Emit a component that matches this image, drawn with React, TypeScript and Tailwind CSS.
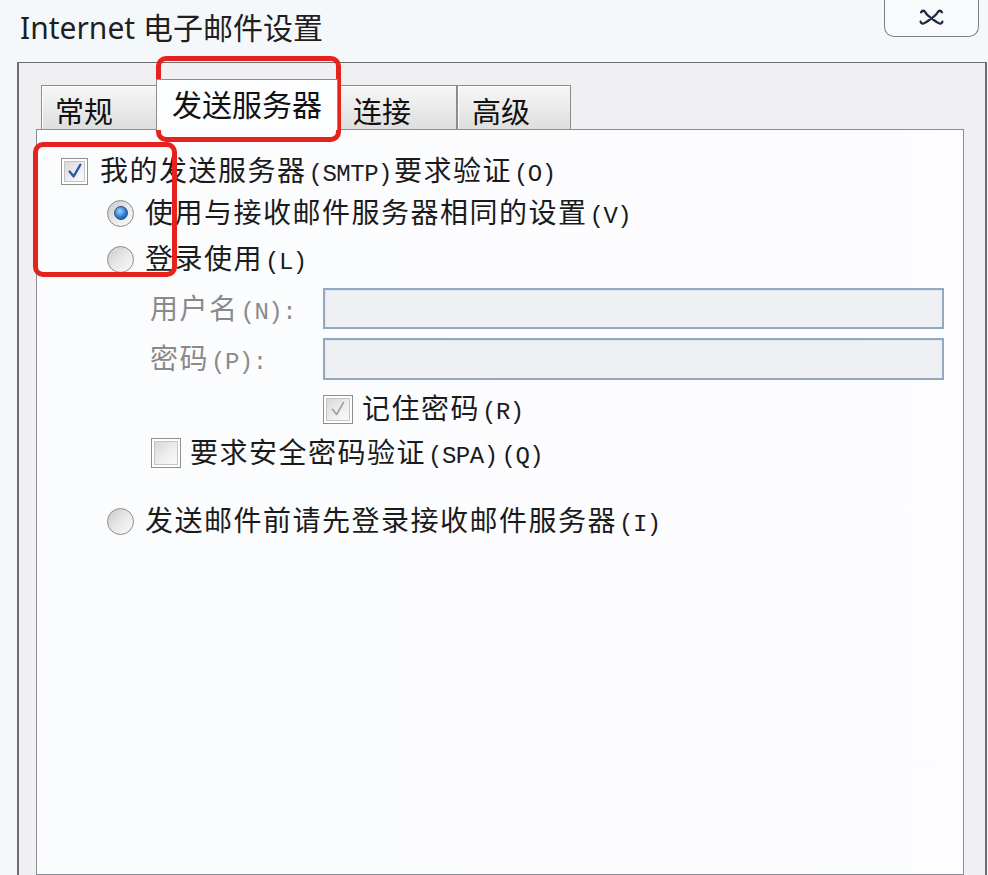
import React from "react";

const cjk = "font-['Noto_Sans_CJK_SC',sans-serif]";
const mono = "font-['Liberation_Mono','Noto_Sans_CJK_SC',monospace] text-[24px]";

function Check({ checked, disabled, size = "w-[27px] h-[27px]" }: { checked?: boolean; disabled?: boolean; size?: string }) {
	return (
		<span className={`${size} shrink-0 border border-[#8e8f8f] bg-white p-[2px] flex`}>
			<span className="flex-1 flex items-center justify-center border border-[#c4c4c4] bg-gradient-to-br from-[#d8d8d8] via-[#ececec] to-[#fafafa]">
				{checked && (
					<svg viewBox="0 0 20 20" className="w-[18px] h-[18px]">
						<path
							d="M4 10.5 L8.5 16 L16 3"
							fill="none"
							stroke={disabled ? "#9c9c9c" : "#2a5aa6"}
							strokeWidth={disabled ? 1.8 : 2.6}
							strokeLinecap="round"
							strokeLinejoin="round"
						/>
					</svg>
				)}
			</span>
		</span>
	);
}

function Radio({ on }: { on?: boolean }) {
	return (
		<span className="w-[27px] h-[27px] shrink-0 rounded-full border border-[#8a8a8a] bg-gradient-to-br from-[#c9c9c9] via-[#e8e8e8] to-[#fbfbfb] flex items-center justify-center">
			{on && (
				<span className="w-[14px] h-[14px] rounded-full border border-[#1d4f8f] bg-[radial-gradient(circle_at_40%_35%,#9fd6ff,#2c7ad0_55%,#13468c)]" />
			)}
		</span>
	);
}

function Text({ zh, mn, tail, gray }: { zh: string; mn?: string; tail?: React.ReactNode; gray?: boolean }) {
	return (
		<span className={`${cjk} text-[28px] tracking-[1.5px] leading-none ${gray ? "text-[#8a8a8a]" : "text-[#1b1b1b]"} whitespace-nowrap`}>
			{zh}
			{mn && <span className={`${mono} tracking-[-0.5px] px-[2px]`}>{mn}</span>}
			{tail}
		</span>
	);
}

function Tab({ label, className }: { label: string; className: string }) {
	return (
		<div
			className={`h-[44px] border border-b-0 border-[#8c8c8c] bg-gradient-to-b from-[#f7f7f7] to-[#dedede] shadow-[inset_1px_1px_0_#ffffff] flex items-center ${className}`}
		>
			<span className={`${cjk} text-[29px] leading-none text-[#111] pt-[6px]`}>{label}</span>
		</div>
	);
}

export default function App() {
	return (
		<div className="relative w-[988px] h-[875px] overflow-hidden bg-[#f5f8fb]">
			<header className="h-[62px] flex items-start justify-between pl-[20px]">
				<h1 className="mt-[10px] font-['Noto_Sans','Noto_Sans_CJK_SC',sans-serif] text-[30px] leading-[36px] text-[#1f1f1f]">
					Internet 电子邮件设置
				</h1>
				<div className="w-[95px] h-[39px] mr-[9px] -mt-[2px] rounded-b-[10px] border border-t-0 border-[#7d8186] bg-[#f8fafc] flex items-center justify-center">
					<svg viewBox="0 0 26 16" className="w-[27px] h-[17px] mt-[1px]">
						<path
							d="M3 3 C4 1 6 1 7 3 C9 7 15 10 19 13 C21 14.5 23 14 23.5 12 M23 3 C22 1 20 1 19 3 C17 7 11 10 7 13 C5 14.5 3 14 2.5 12"
							fill="none"
							stroke="#1f2a3c"
							strokeWidth="2.2"
							strokeLinecap="round"
						/>
					</svg>
				</div>
			</header>

			<div className="ml-[17px] w-[970px] h-[813px] border-l-2 border-t border-r-2 border-[#6c6c72] bg-[#f0f0f2] pl-[17px] pr-[21px] flex flex-col">
				<div className="h-[66px] flex items-end pl-[5px]">
					<Tab label="常规" className="w-[117px] pl-[13px]" />
					<div className="w-[182px] -mx-[2px] h-[51px] z-10 border border-b-0 border-[#8c8c8c] bg-[#fcfdfe] flex items-center pl-[15px] mb-[-1px] pb-[4px]">
						<span className={`${cjk} text-[30px] leading-none text-[#111]`}>发送服务器</span>
					</div>
					<Tab label="连接" className="w-[121px] pl-[16px]" />
					<Tab label="高级" className="w-[114px] pl-[14px]" />
				</div>

				<div className="flex-1 border border-[#898c95] bg-gradient-to-r from-[#fbfcfe] to-[#fdfdff] pl-[24px] pt-[21px] flex flex-col">
					<div className="h-[40px] flex items-center gap-[12px]">
						<Check checked />
						<Text zh="我的发送服务器" mn="(SMTP)" tail={<>要求验证<span className={`${mono} tracking-[-0.5px] px-[2px]`}>(O)</span></>} />
					</div>
					<div className="h-[40px] mt-[2px] ml-[46px] flex items-center gap-[11px]">
						<Radio on />
						<Text zh="使用与接收邮件服务器相同的设置" mn="(V)" />
					</div>
					<div className="h-[40px] mt-[6px] ml-[46px] flex items-center gap-[11px]">
						<Radio />
						<Text zh="登录使用" mn="(L)" />
					</div>
					<div className="h-[41px] mt-[9px] ml-[89px] flex items-center">
						<span className="w-[173px]">
							<Text zh="用户名" mn="(N):" gray />
						</span>
						<div className="w-[621px] h-[41px] border-2 border-[#93a9c0] bg-[#eef0f4] shadow-[inset_1px_1px_0_#dfe8f2]" />
					</div>
					<div className="h-[42px] mt-[9px] ml-[89px] flex items-center">
						<span className="w-[173px]">
							<Text zh="密码" mn="(P):" gray />
						</span>
						<div className="w-[621px] h-[42px] border-2 border-[#93a9c0] bg-[#eef0f4] shadow-[inset_1px_1px_0_#dfe8f2]" />
					</div>
					<div className="h-[40px] mt-[9px] ml-[262px] flex items-center gap-[9px]">
						<Check checked disabled size="w-[30px] h-[29px]" />
						<Text zh="记住密码" mn="(R)" />
					</div>
					<div className="h-[40px] mt-[4px] ml-[90px] flex items-center gap-[9px]">
						<Check size="w-[30px] h-[30px]" />
						<Text zh="要求安全密码验证" mn="(SPA)" tail={<span className={`${mono} tracking-[-0.5px] px-[2px]`}>(Q)</span>} />
					</div>
					<div className="h-[40px] mt-[28px] ml-[46px] flex items-center gap-[11px]">
						<Radio />
						<Text zh="发送邮件前请先登录接收邮件服务器" mn="(I)" />
					</div>
				</div>
			</div>

			<div className="absolute left-[156px] top-[56px] w-[185px] h-[86px] border-[5px] border-[#e6221c] rounded-[10px]" />
			<div className="absolute left-[33px] top-[142px] w-[144px] h-[135px] border-[5px] border-[#e6221c] rounded-[10px]" />
		</div>
	);
}
